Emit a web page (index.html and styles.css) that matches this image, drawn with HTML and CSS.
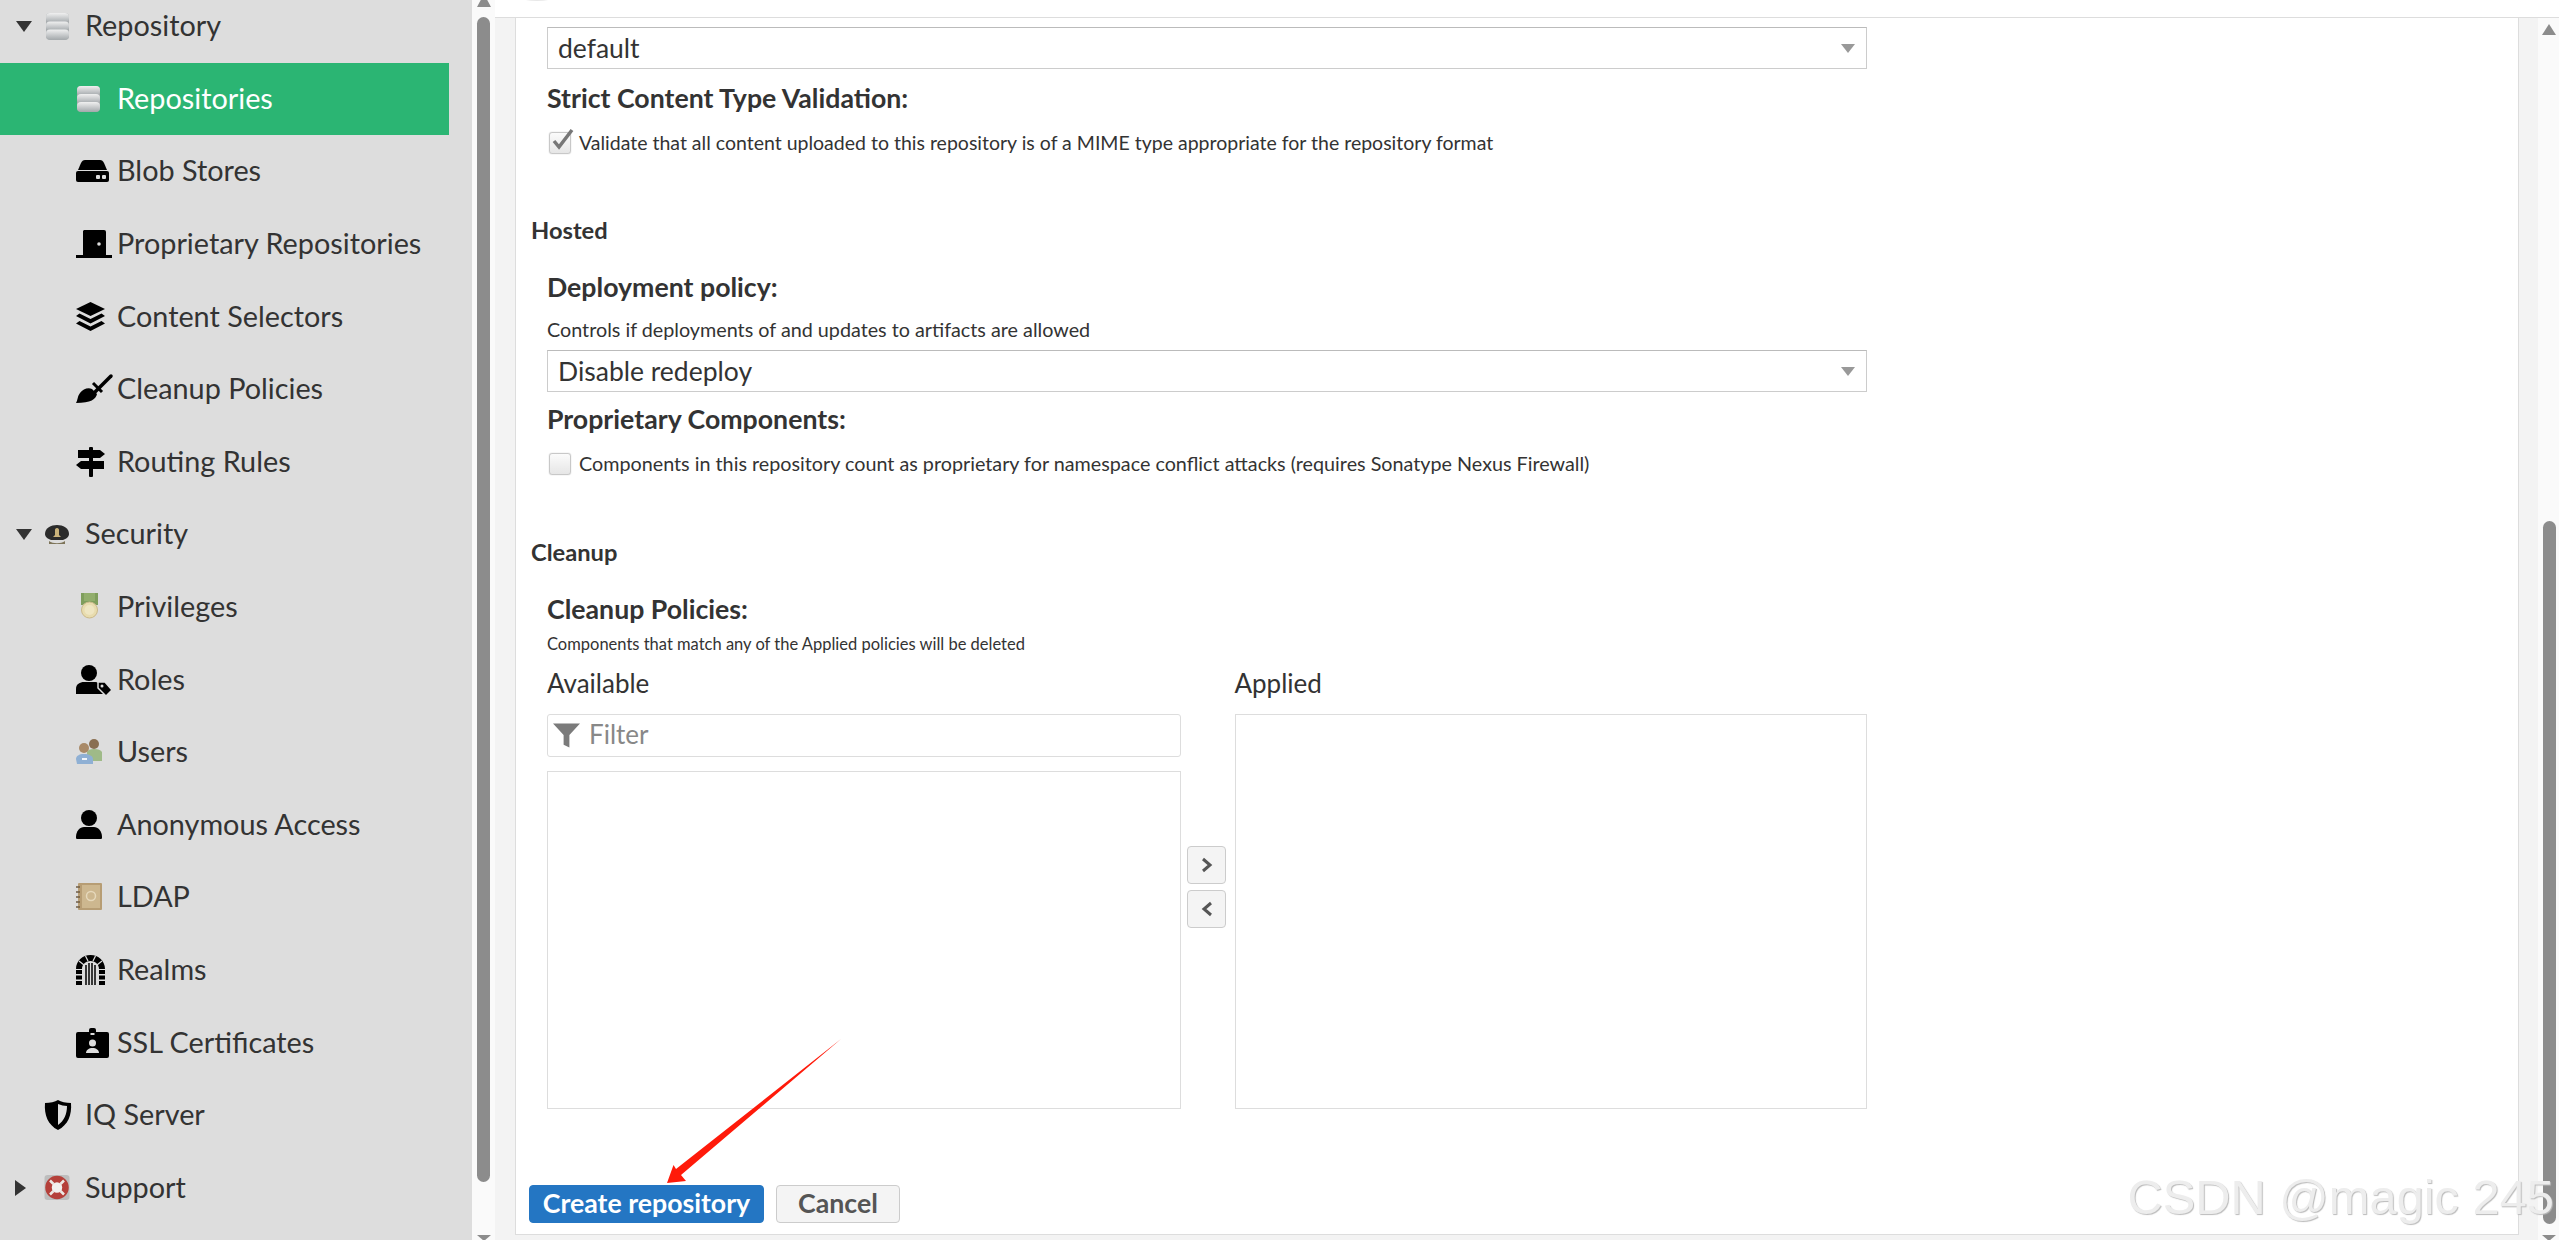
FILE: index.html
```html
<!DOCTYPE html>
<html lang="en">
<head>
<meta charset="utf-8">
<title>Create repository</title>
<link rel="stylesheet" href="styles.css">
</head>
<body>
<div class="app">
  <aside class="sidebar">
    <nav class="tree">
      <div class="row parent">
        <span class="caret"><span class="tri-down"></span></span>
        <svg class="ico" viewBox="0 0 36 30"><defs><linearGradient id="db" x1="0" y1="0" x2="0" y2="1"><stop offset="0" stop-color="#f0f0f0"/><stop offset="1" stop-color="#a6abae"/></linearGradient></defs><rect x="2" y="2" width="23" height="27" rx="4" fill="#a9adaf"/><rect x="2" y="2" width="23" height="9.500" rx="4" fill="url(#db)"/><rect x="2" y="10.500" width="23" height="9" rx="4" fill="url(#db)"/><rect x="2" y="18.500" width="23" height="10" rx="4" fill="url(#db)"/></svg>
        <span class="label">Repository</span>
      </div>
      <div class="row child active">
        <svg class="ico" viewBox="0 0 36 30"><rect x="1" y="2" width="23" height="26" rx="4" fill="#a9adaf"/><rect x="1" y="2" width="23" height="9" rx="4" fill="url(#db)"/><rect x="1" y="10" width="23" height="9" rx="4" fill="url(#db)"/><rect x="1" y="18" width="23" height="9.500" rx="4" fill="url(#db)"/></svg>
        <span class="label">Repositories</span>
      </div>
      <div class="row child">
        <svg class="ico" viewBox="0 0 36 30"><path d="M9 4h15c2 0 3 1 4 3l3 7H2l3-7c1-2 2-3 4-3z" fill="#000"/><rect y="15" width="33" height="11" rx="2" fill="#000"/><rect x="20" y="19" width="4" height="4" rx="1" fill="#ddd"/><rect x="26" y="19" width="4" height="4" rx="1" fill="#ddd"/></svg>
        <span class="label">Blob Stores</span>
      </div>
      <div class="row child">
        <svg class="ico" viewBox="0 0 36 30"><path d="M8 1h20a2 2 0 0 1 2 2v23H7V2z" fill="#000"/><rect y="26" width="36" height="3" fill="#000"/><circle cx="23" cy="15" r="1.800" fill="#ddd"/></svg>
        <span class="label">Proprietary Repositories</span>
      </div>
      <div class="row child">
        <svg class="ico" viewBox="0 0 36 30"><path d="M14.500 0 29 7 14.500 14 0 7z" fill="#000"/><path d="M3.500 11.500 14.500 17 25.500 11.500 29 14 14.500 21.500 0 14z" fill="#000"/><path d="M3.500 19 14.500 24.500 25.500 19 29 21.500 14.500 29 0 21.500z" fill="#000"/></svg>
        <span class="label">Content Selectors</span>
      </div>
      <div class="row child">
        <svg class="ico" viewBox="0 0 36 30"><path d="M0 29c2-3 1-6 4-10 3-4 8-6 12-4l5 5c-1 5-6 9-21 9z" fill="#000"/><path d="M19 18 35 2" stroke="#000" stroke-width="3.500" stroke-linecap="round"/><path d="M17 9l9 9" stroke="#000" stroke-width="3"/></svg>
        <span class="label">Cleanup Policies</span>
      </div>
      <div class="row child">
        <svg class="ico" viewBox="0 0 36 30"><rect x="13" y="0" width="4" height="30" rx="1" fill="#000"/><path d="M2 3h22l5 4-5 4H2z" fill="#000"/><path d="M5 14h23v8H5l-5-4z" fill="#000"/></svg>
        <span class="label">Routing Rules</span>
      </div>
      <div class="row parent">
        <span class="caret"><span class="tri-down"></span></span>
        <svg class="ico" viewBox="0 0 36 30"><path d="M1 15C1 9 7 6 13 6s12 3 12 9c0 3-3 5-6 6H7c-3-1-6-3-6-6z" fill="#2b2b2b"/><path d="M5 22c4 3 12 3 16 0v3H5z" fill="#7d7458"/><path d="M13 9c1.500 0 2 1 2 2v5l2 2H9l2-2v-5c0-1 .5-2 2-2z" fill="#c9b27a"/></svg>
        <span class="label">Security</span>
      </div>
      <div class="row child">
        <svg class="ico" viewBox="0 0 36 30"><rect x="5" y="1" width="17" height="12" fill="#7f9e5c"/><rect x="8" y="1" width="11" height="8" fill="#92ae6c"/><circle cx="13.500" cy="18" r="8" fill="#e8dcae" stroke="#cbb98a"/><circle cx="13.500" cy="18" r="5" fill="#efe6c2"/></svg>
        <span class="label">Privileges</span>
      </div>
      <div class="row child">
        <svg class="ico" viewBox="0 0 36 30"><circle cx="13" cy="8" r="8" fill="#000"/><path d="M0 29v-5c0-5 4-7 8-7h10c4 0 7 2 7 5l4 7z" fill="#000"/><path d="M22 17h7l7 8-6 6-8-8z" fill="#000" stroke="#ddd" stroke-width="1.500"/><circle cx="26" cy="21" r="1.500" fill="#ddd"/></svg>
        <span class="label">Roles</span>
      </div>
      <div class="row child">
        <svg class="ico" viewBox="0 0 36 30"><circle cx="18" cy="7" r="5" fill="#8a6f52"/><path d="M11 15c1-2 3-3 7-3s7 1 8 3v9H11z" fill="#9fba88"/><circle cx="8" cy="11" r="5" fill="#a98a68"/><path d="M0 22c0-3 3-5 8-5s9 2 9 5v5H1z" fill="#8fb0d4"/><rect x="6" y="21" width="5" height="2" fill="#f2f6fa"/></svg>
        <span class="label">Users</span>
      </div>
      <div class="row child">
        <svg class="ico" viewBox="0 0 36 30"><circle cx="13" cy="8" r="8" fill="#000"/><path d="M1 29c-1 0-1-1-1-2 0-6 4-10 8-10h10c4 0 8 4 8 10 0 1 0 2-1 2z" fill="#000"/></svg>
        <span class="label">Anonymous Access</span>
      </div>
      <div class="row child">
        <svg class="ico" viewBox="0 0 36 30"><rect x="2" y="1" width="24" height="27" rx="1" fill="#b79d74"/><rect x="6" y="3" width="18" height="23" fill="#cdb78f"/><circle cx="15" cy="14" r="4.500" fill="none" stroke="#e6d8bb" stroke-width="1.500"/><path d="M0 5h4M0 10h4M0 15h4M0 20h4M0 25h4" stroke="#6f5c44" stroke-width="1.500"/></svg>
        <span class="label">LDAP</span>
      </div>
      <div class="row child">
        <svg class="ico" viewBox="0 0 36 30"><path d="M14.500 0c8 0 14.500 6 14.500 14H23c0-5-4-8-8.500-8S6 9 6 14H0C0 6 6.500 0 14.500 0z" fill="#000"/><path d="M9.500 1 12 6M19.500 1 17 6M3 6l5 4M26 6l-5 4" stroke="#ddd" stroke-width="1.200"/><path d="M0 15h6v4H0zM0 20.500h6v4H0zM0 26h6v4H0zM23 15h6v4h-6zM23 20.500h6v4h-6zM23 26h6v4h-6z" fill="#000"/><path d="M10 10v20M13 8v22M16 8v22M19 10v20" stroke="#000" stroke-width="1.500"/></svg>
        <span class="label">Realms</span>
      </div>
      <div class="row child">
        <svg class="ico" viewBox="0 0 36 30"><path d="M2 4h11V2a2 2 0 0 1 2-2h3a2 2 0 0 1 2 2v2h11a2 2 0 0 1 2 2v22a2 2 0 0 1-2 2H2a2 2 0 0 1-2-2V6a2 2 0 0 1 2-2z" fill="#000"/><circle cx="16.500" cy="15" r="3.500" fill="#ddd"/><path d="M10 25c0-3 3-5 6.500-5s6.500 2 6.500 5z" fill="#ddd"/><rect x="14.500" y="5" width="4" height="2" fill="#ddd"/></svg>
        <span class="label">SSL Certificates</span>
      </div>
      <div class="row parent noarrow">
        <svg class="ico" viewBox="0 0 36 30"><path d="M14 0c3 2 8 3 13 3 1 12-3 22-13 27C4 25 0 15 1 3c5 0 10-1 13-3z" fill="#000"/><path d="M14 4c3 1 6 2 9 2 0 8-3 15-9 19z" fill="#ddd"/></svg>
        <span class="label">IQ Server</span>
      </div>
      <div class="row parent">
        <span class="caret"><span class="tri-right"></span></span>
        <svg class="ico" viewBox="0 0 36 30"><rect x="0.500" y="2" width="25" height="25" rx="3" fill="#bdbdbd"/><circle cx="13" cy="14.500" r="8" fill="#f2f0ee"/><circle cx="13" cy="14.500" r="8.500" fill="none" stroke="#b5403a" stroke-width="6.500"/><path d="M6 7.500l3.500 3.500M20 7.500 16.500 11M6 21.500 9.500 18M20 21.500 16.500 18" stroke="#ece8e4" stroke-width="2.500"/></svg>
        <span class="label">Support</span>
      </div>
    </nav>
  </aside>

  <div class="side-scroll">
    <span class="arrow-up"></span>
    <span class="side-thumb"></span>
    <span class="arrow-down"></span>
  </div>

  <main class="main">
    <header class="topbar"><span class="topbar-tip"></span></header>
    <div class="workspace">
      <section class="panel">
        <div class="combo combo-first"><span class="combo-value">default</span><span class="combo-arrow"></span></div>
        <h3 class="field-title title-strict">Strict Content Type Validation:</h3>
        <label class="check-row check-strict">
          <span class="box"><svg class="tick" viewBox="0 0 26 26"><path d="M5 13l5 6L23 2" fill="none" stroke="#777" stroke-width="3.500"/></svg></span>
          <span class="check-text">Validate that all content uploaded to this repository is of a MIME type appropriate for the repository format</span>
        </label>

        <h2 class="section-title title-hosted">Hosted</h2>
        <h3 class="field-title title-deploy">Deployment policy:</h3>
        <p class="help help-deploy">Controls if deployments of and updates to artifacts are allowed</p>
        <div class="combo combo-deploy"><span class="combo-value">Disable redeploy</span><span class="combo-arrow"></span></div>
        <h3 class="field-title title-prop">Proprietary Components:</h3>
        <label class="check-row check-prop">
          <span class="box"></span>
          <span class="check-text">Components in this repository count as proprietary for namespace conflict attacks (requires Sonatype Nexus Firewall)</span>
        </label>

        <h2 class="section-title title-cleanup">Cleanup</h2>
        <h3 class="field-title title-policies">Cleanup Policies:</h3>
        <p class="help-small">Components that match any of the Applied policies will be deleted</p>

        <div class="picker-heads">
          <span class="picker-head">Available</span>
          <span class="picker-head">Applied</span>
        </div>
        <div class="picker">
          <div class="picker-left">
            <div class="filter">
              <svg class="filter-ico" viewBox="0 0 28 26"><path d="M0 0h28L17 12v13l-6-3V12z" fill="#7b7b7b"/></svg>
              <span class="filter-text">Filter</span>
            </div>
            <div class="list"></div>
          </div>
          <div class="picker-moves">
            <button class="move" type="button"><svg class="chev" viewBox="0 0 12 16"><path d="M2 2l7 6-7 6" fill="none" stroke="#555" stroke-width="3"/></svg></button>
            <button class="move" type="button"><svg class="chev" viewBox="0 0 12 16"><path d="M10 2 3 8l7 6" fill="none" stroke="#555" stroke-width="3"/></svg></button>
          </div>
          <div class="list list-applied"></div>
        </div>

        <div class="actions">
          <button class="btn btn-primary" type="button">Create repository</button>
          <button class="btn btn-default" type="button">Cancel</button>
        </div>
      </section>
      <div class="page-scroll">
        <span class="arrow-up"></span>
        <span class="page-thumb"></span>
        <span class="arrow-down"></span>
      </div>
    </div>
  </main>
</div>

<svg class="annot-arrow" viewBox="0 0 180 150"><path d="M179 2 19 138l5 6-19 2 6.500-18 2.500 4z" fill="#ff1a0a"/></svg>
<div class="watermark">CSDN @magic 245</div>
</body>
</html>
```
FILE: styles.css
```css
* { box-sizing: border-box; }
html, body { margin: 0; height: 1240px; overflow: hidden; background: #f3f3f3; }
body { font-family: Lato, "Open Sans", sans-serif; color: #333; position: relative; }
.app { display: flex; height: 1240px; }

.sidebar { width: 472px; flex: none; background: #ddd; overflow: hidden; }
.tree { margin-top: -10px; width: 449px; }
.row { height: 72.6px; display: flex; align-items: center; font-size: 28.800px; color: #333; }
.row.child { padding-left: 76px; }
.row.parent { padding-left: 16px; }
.row.noarrow { padding-left: 44px; }
.row.active { background: #2bb573; color: #fff; }
.ico { width: 36px; height: 30px; flex: none; overflow: visible; }
.label { padding-bottom: 2px; }
.row.child .label { margin-left: 5px; }
.row.parent .label { margin-left: 5px; }
.caret { width: 28px; flex: none; display: flex; align-items: center; }
.tri-down { width: 0; height: 0; border-top: 11px solid #333; border-left: 8.500px solid transparent; border-right: 8.500px solid transparent; }
.tri-right { width: 0; height: 0; margin-left: -1px; border-left: 11px solid #333; border-top: 8.500px solid transparent; border-bottom: 8.500px solid transparent; }

.side-scroll { width: 23px; flex: none; background: #fafafa; position: relative; }
.side-thumb { position: absolute; left: 5px; top: 17px; width: 13px; height: 1165px; border-radius: 7px; background: #8c8c8c; }
.side-scroll .arrow-up { position: absolute; left: 5px; top: -6px; border: 7px solid transparent; border-top: 0; border-bottom: 13px solid #8c8c8c; }
.side-scroll .arrow-down { position: absolute; left: 5px; bottom: -1px; border: 7px solid transparent; border-bottom: 0; border-top: 6px solid #8c8c8c; }

.main { flex: 1; display: flex; flex-direction: column; min-width: 0; }
.topbar { height: 18px; flex: none; background: #fff; border-bottom: 1px solid #ddd; position: relative; overflow: hidden; }
.topbar-tip { position: absolute; left: 24px; top: -8px; width: 36px; height: 9px; border-radius: 50%; background: #e8e8e8; }
.workspace { flex: 1; display: flex; padding-left: 20px; min-height: 0; }

.panel { width: 2004px; height: 1217px; flex: none; background: #fff; border: 1px solid #ddd; border-top: 0; padding: 9px 0 0 31px; margin-right: 19px; }
.field-title { margin: 0; font-size: 26.700px; line-height: 30px; font-weight: 700; color: #333; }
.section-title { margin: 0 0 0 -16px; font-size: 23.700px; line-height: 24px; font-weight: 700; color: #333; }
.help { margin: 0; font-size: 19.750px; line-height: 20px; color: #333; }
.help-small { margin: 10px 0 0; font-size: 16.500px; line-height: 20px; color: #333; }

.combo { width: 1320px; height: 42px; border: 1px solid #ccc; border-top-color: #bbb; display: flex; align-items: center; justify-content: space-between; padding: 0 11px 0 10px; font-size: 26.500px; color: #333; }
.combo-arrow { width: 0; height: 0; border-left: 7.500px solid transparent; border-right: 7.500px solid transparent; border-top: 9px solid #999; }
.combo-deploy { margin-top: 10px; }

.title-strict { margin-top: 14px; }
.title-hosted { margin-top: 63px; }
.title-deploy { margin-top: 30px; }
.help-deploy { margin-top: 18px; }
.title-prop { margin-top: 12px; }
.title-cleanup { margin-top: 64px; }
.title-policies { margin-top: 30px; }

.check-row { display: flex; align-items: center; height: 24px; color: #333; }
.check-text { padding-bottom: 2px; }
.check-strict { margin-top: 18px; font-size: 19.500px; }
.check-prop { margin-top: 18px; font-size: 19.750px; }
.box { width: 22px; height: 22px; margin: 0 8px 0 2px; flex: none; border: 1px solid #c8c8c8; border-radius: 3px; background: linear-gradient(#fbfbfb, #e6e6e6); box-shadow: 0 0 1px #aaa; position: relative; }
.tick { position: absolute; left: -1px; top: -5px; width: 26px; height: 26px; }

.picker-heads { margin-top: 16px; display: grid; grid-template-columns: 687.500px 1fr; width: 1320px; height: 30px; line-height: 27px; font-size: 26px; color: #333; }
.picker { margin-top: 14px; width: 1320px; height: 395px; display: grid; grid-template-columns: 634px 53.500px 1fr; }
.picker-left { display: flex; flex-direction: column; gap: 14px; min-height: 0; }
.filter { height: 43px; flex: none; border: 1px solid #ddd; border-radius: 3px; display: flex; align-items: center; padding-left: 5px; }
.filter-ico { width: 27px; height: 26px; flex: none; }
.filter-text { margin-left: 9px; padding-bottom: 3px; font-size: 26px; color: #888; }
.list { flex: 1; border: 1px solid #ddd; background: #fff; }
.picker-moves { display: flex; flex-direction: column; gap: 6px; padding: 132px 0 0 6px; }
.move { width: 39px; height: 38px; padding: 0; border: 1px solid #ccc; border-radius: 4px; background: #f4f4f4; display: flex; align-items: center; justify-content: center; }
.chev { width: 12px; height: 16px; }

.actions { margin: 76px 0 0 -18px; display: flex; gap: 12px; }
.btn { height: 38px; border-radius: 4px; font-family: Lato, "Open Sans", sans-serif; font-size: 26.700px; font-weight: 700; padding: 0 0 3px; }
.btn-primary { width: 235px; background: #2476c3; border: 1px solid #2476c3; color: #fff; }
.btn-default { width: 124px; background: #f4f4f4; border: 1px solid #ccc; color: #555; }

.page-scroll { width: 21px; flex: none; background: #fafafa; position: relative; }
.page-thumb { position: absolute; left: 5px; top: 503px; width: 13px; height: 703px; border-radius: 7px; background: #8c8c8c; }
.page-scroll .arrow-up { position: absolute; left: 4px; top: 6px; border: 7px solid transparent; border-top: 0; border-bottom: 11px solid #8c8c8c; }
.page-scroll .arrow-down { position: absolute; left: 4px; bottom: -1px; border: 7px solid transparent; border-bottom: 0; border-top: 6px solid #8c8c8c; }

.annot-arrow { position: absolute; left: 662px; top: 1037px; width: 180px; height: 150px; }
.watermark { position: absolute; right: 5px; top: 1167px; font-family: "Liberation Sans", sans-serif; font-size: 48.800px; line-height: 60px; color: #ededed; text-shadow: 1px 1px 1px #bbb; white-space: nowrap; }
```
